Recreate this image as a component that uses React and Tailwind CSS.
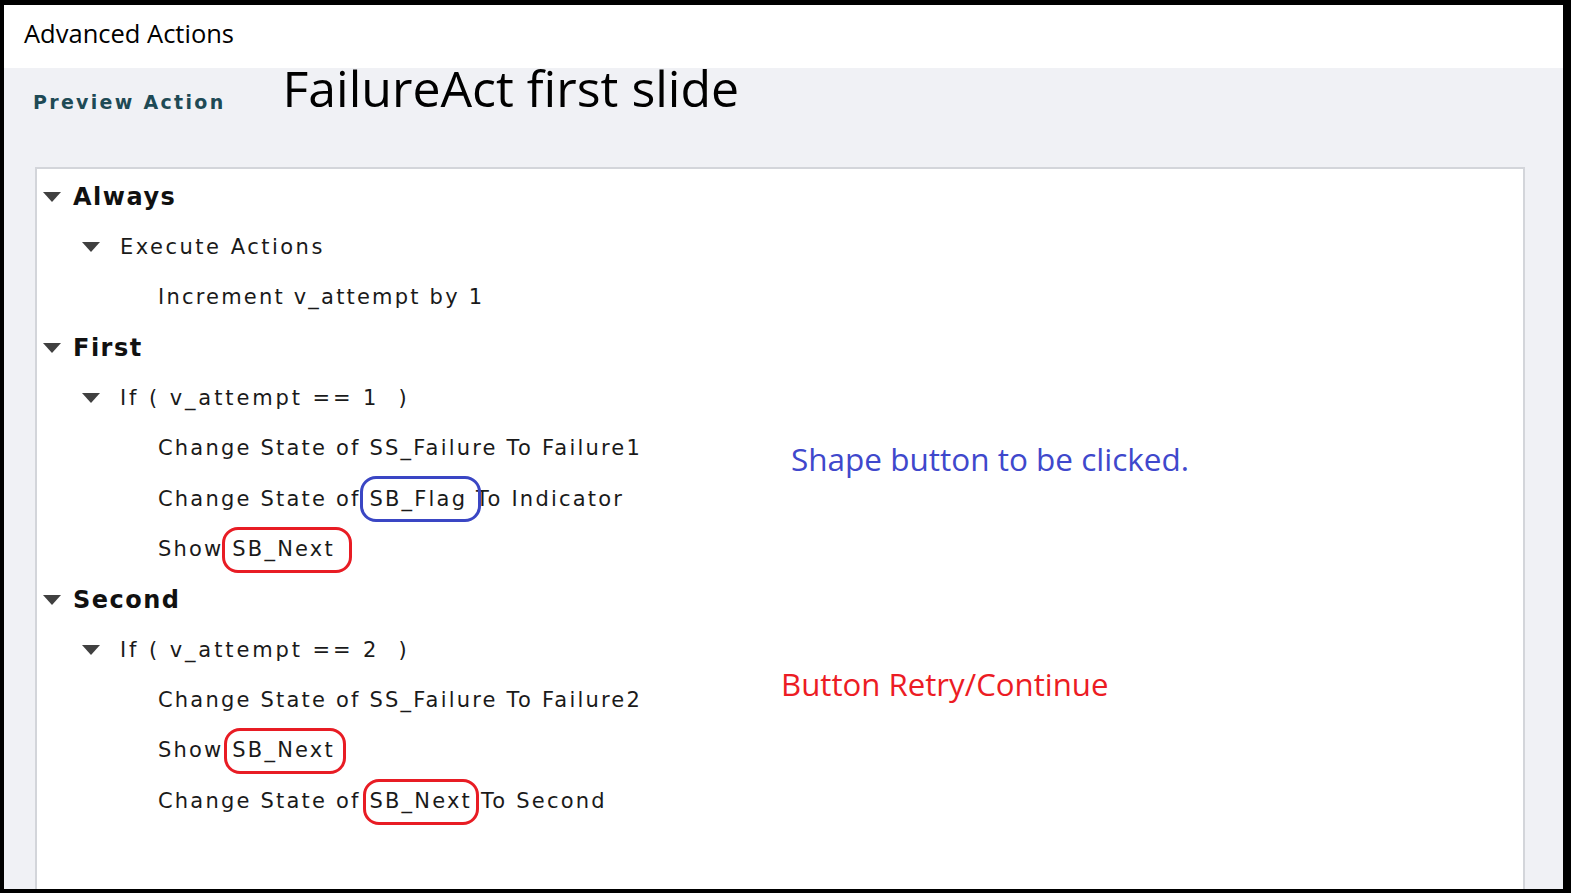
import React from "react";

const tree = "font-['DejaVu_Sans',_Verdana,_sans-serif]";

function Tri() {
  return (
    <svg width="18" height="10" viewBox="0 0 18 10" className="shrink-0">
      <polygon points="0,0 18,0 9,10" fill="#404040" />
    </svg>
  );
}

function Oval({ children, color, l, r, t, b }) {
  return (
    <span className="relative">
      {children}
      <span
        className={`absolute rounded-[16px] border-[3px] ${color}`}
        style={{ left: l, right: r, top: t, bottom: b }}
      />
    </span>
  );
}

function Row({ level, wide, children }) {
  if (level === 1) {
    return (
      <div className="flex h-[50.4px] items-center pl-[6px]">
        <Tri />
        <span className="ml-[12px] text-[24px] font-bold tracking-[1.5px] text-[#111] leading-none whitespace-pre">
          {children}
        </span>
      </div>
    );
  }
  if (level === 2) {
    return (
      <div className="flex h-[50.4px] items-center pl-[45px]">
        <Tri />
        <span
          className={`ml-[20px] text-[21px] ${wide ? "tracking-[2.9px]" : "tracking-[2.5px]"} text-[#1a1a1a] leading-none whitespace-pre`}
        >
          {children}
        </span>
      </div>
    );
  }
  return (
    <div className="flex h-[50.4px] items-center pl-[121px]">
      <span className="text-[21px] tracking-[2.2px] text-[#1a1a1a] leading-none whitespace-pre">
        {children}
      </span>
    </div>
  );
}

export default function App() {
  const red = "border-[#e81c24]";
  const blue = "border-[#3a46c4]";
  return (
    <div className="w-[1571px] h-[893px] bg-black pt-[5px] pl-[4px] pr-[8px] pb-[4px] overflow-hidden">
      <div className="flex h-full flex-col">
        <div className="h-[63px] shrink-0 bg-white pl-[20px] pt-[13px]">
          <div className="font-['Open_Sans',_sans-serif] text-[25.5px] leading-[30px] text-black">
            Advanced Actions
          </div>
        </div>
        <div className="flex flex-1 flex-col bg-[#f0f1f5] pl-[31px] pr-[38px] min-h-0">
          <div className="flex h-[99px] shrink-0 items-start">
            <div className={`${tree} mt-[22px] ml-[-2px] text-[19px] font-bold leading-[24px] tracking-[2.3px] text-[#1e4a55]`}>
              Preview Action
            </div>
            <div className="ml-[57px] mt-[-10px] font-['Open_Sans',_sans-serif] text-[50px] leading-[60px] text-black">
              FailureAct first slide
            </div>
          </div>
          <div className={`${tree} relative flex-1 border-2 border-b-0 border-[#d3d5da] bg-white pt-[2.5px]`}>
            <Row level={1}>Always</Row>
            <Row level={2}>Execute Actions</Row>
            <Row level={3}>Increment v_attempt by 1</Row>
            <Row level={1}>First</Row>
            <Row level={2} wide>{"If ( v_attempt == 1  )"}</Row>
            <Row level={3}>Change State of SS_Failure To Failure1</Row>
            <Row level={3}>
              {"Change State of "}
              <Oval color={blue} l={-9} r={-14} t={-11} b={-11}>SB_Flag</Oval>
              {" To Indicator"}
            </Row>
            <Row level={3}>
              {"Show "}
              <Oval color={red} l={-10} r={-17} t={-10} b={-12}>SB_Next</Oval>
            </Row>
            <Row level={1}>Second</Row>
            <Row level={2} wide>{"If ( v_attempt == 2  )"}</Row>
            <Row level={3}>Change State of SS_Failure To Failure2</Row>
            <Row level={3}>
              {"Show "}
              <Oval color={red} l={-8} r={-11} t={-10} b={-12}>SB_Next</Oval>
            </Row>
            <Row level={3}>
              {"Change State of "}
              <Oval color={red} l={-6} r={-7} t={-10} b={-12}>SB_Next</Oval>
              {" To Second"}
            </Row>

            <div className="absolute left-[754px] top-[270px] font-['Open_Sans',_sans-serif] text-[31.5px] leading-[40px] text-[#3f48cc] whitespace-nowrap">
              Shape button to be clicked.
            </div>
            <div className="absolute left-[744px] top-[495px] font-['Open_Sans',_sans-serif] text-[31.2px] leading-[40px] text-[#ec1c24] whitespace-nowrap">
              Button Retry/Continue
            </div>
          </div>
        </div>
      </div>
    </div>
  );
}
